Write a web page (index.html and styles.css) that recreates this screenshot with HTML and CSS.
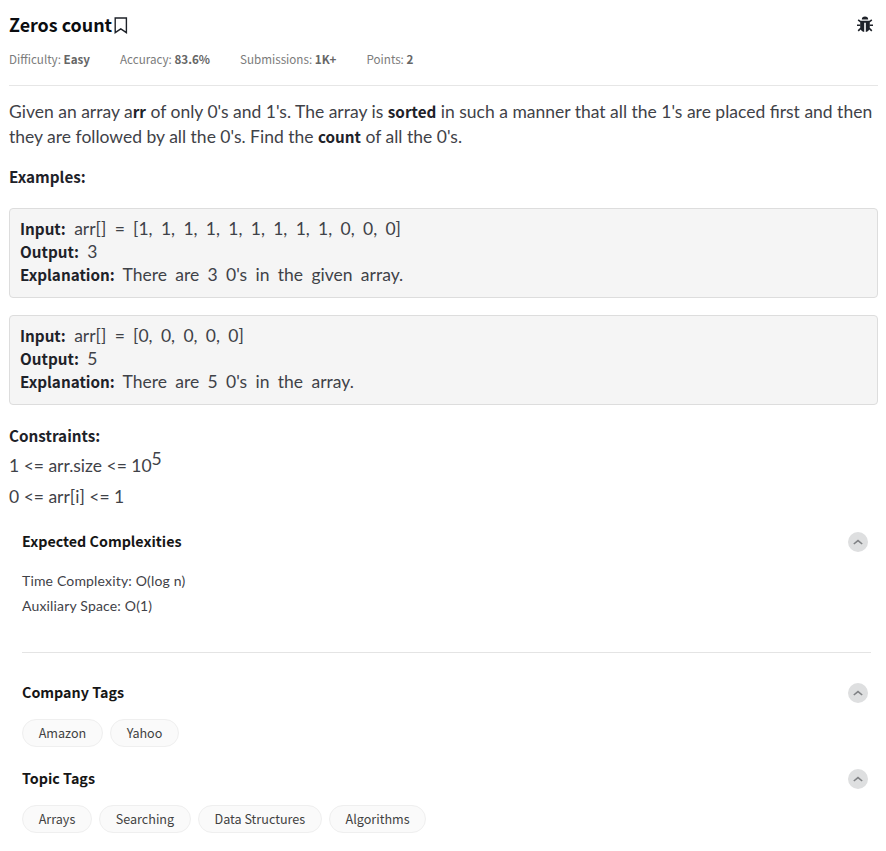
FILE: index.html
```html
<!DOCTYPE html>
<html lang="en">
<head>
<meta charset="utf-8">
<title>Zeros count</title>
<link rel="stylesheet" href="styles.css">
</head>
<body>
<main class="problem">
  <header class="head">
    <h1 class="title">Zeros count</h1>
    <svg class="bookmark" viewBox="0 0 14 17"><path d="M1.2 1h11.2v14.6L6.8 11.8 1.2 15.6z"/></svg>
    <svg class="bug" viewBox="0 0 16 16"><path class="shell" d="M4.8 3.4a3.2 3 0 0 1 6.4 0zM3.2 4.8h9.6v6.2c0 2.8-1.8 4.6-4 4.9V6.8H7.2v9.1c-2.2-.3-4-2.1-4-4.9z"/><path class="legs" d="M3.8 6 1.2 3.8M3.4 9.3H0M4 12.2 1.2 14.8M12.2 6l2.6-2.2M12.6 9.3H16M12 12.2l2.8 2.6"/></svg>
  </header>
  <div class="meta">
    <span>Difficulty: <b>Easy</b></span>
    <span>Accuracy: <b>83.6%</b></span>
    <span>Submissions: <b>1K+</b></span>
    <span>Points: <b>2</b></span>
  </div>
  <section class="statement">
    <p class="intro">Given an array a<b>rr</b> of only 0's and 1's. The array is <b>sorted</b> in such a manner that all the 1's are placed first and then<br>they are followed by all the 0's. Find the <b>count</b> of all the 0's.</p>
    <p class="label"><b>Examples:</b></p>
    <pre class="example"><b>Input:</b> arr[] = [1, 1, 1, 1, 1, 1, 1, 1, 1, 0, 0, 0]
<b>Output:</b> 3
<b>Explanation:</b> There are 3 0's in the given array.</pre>
    <pre class="example"><b>Input:</b> arr[] = [0, 0, 0, 0, 0]
<b>Output:</b> 5
<b>Explanation:</b> There are 5 0's in the array.</pre>
    <p class="constraints"><b>Constraints:</b><br>1 &lt;= arr.size &lt;= 10<sup>5</sup><br>0 &lt;= arr[i] &lt;= 1</p>
  </section>
  <section class="panel complexity">
    <h2>Expected Complexities <svg class="toggle" viewBox="0 0 20 20"><circle cx="10" cy="10" r="10"/><path d="M5.8 12 10 8.6l4.2 3.4"/></svg></h2>
    <p>Time Complexity: O(log n)<br>Auxiliary Space: O(1)</p>
  </section>
  <section class="panel">
    <h2>Company Tags <svg class="toggle" viewBox="0 0 20 20"><circle cx="10" cy="10" r="10"/><path d="M5.8 12 10 8.6l4.2 3.4"/></svg></h2>
    <div class="tags"><span>Amazon</span><span>Yahoo</span></div>
  </section>
  <section class="panel">
    <h2>Topic Tags <svg class="toggle" viewBox="0 0 20 20"><circle cx="10" cy="10" r="10"/><path d="M5.8 12 10 8.6l4.2 3.4"/></svg></h2>
    <div class="tags"><span>Arrays</span><span>Searching</span><span>Data Structures</span><span>Algorithms</span></div>
  </section>
</main>
</body>
</html>
```
FILE: styles.css
```css
* { box-sizing: border-box; }
body {
  margin: 0;
  background: #fff;
  color: #3f4248;
  font-family: Lato, sans-serif;
}
h1, h2, p, pre { margin: 0; }
b, h1, h2 { font-family: "Noto Sans CJK SC", sans-serif; font-weight: 700; }
.problem { padding: 9px 8px 0 9px; }
.head { display: flex; align-items: center; height: 32px; }
.title { font-size: 17.9px; line-height: 31px; margin-top: -1px; color: #0b0d10; }
.bookmark { width: 14px; height: 17px; margin: 1px 0 0 2px; fill: none; stroke: #1e2229; stroke-width: 1.4; }
.bug { width: 16px; height: 16px; margin: -3px 5px 0 auto; }
.shell { fill: #1e2229; }
.legs { fill: none; stroke: #1e2229; stroke-width: 1.6; }
.meta {
  display: flex;
  gap: 30px;
  height: 45px;
  border-bottom: 1px solid #e6e6e6;
  font: 11.65px/36px "Noto Sans CJK SC", sans-serif;
  color: #7b7b7b;
}
.meta b { color: #666; }
.statement { font-size: 17.5px; }
.statement b { font-size: 15.25px; line-height: 1; color: #1e2229; }
.intro { margin-top: 13px; line-height: 25px; white-space: nowrap; }
.label { margin-top: 15px; line-height: 25px; }
.example {
  height: 90px;
  margin-top: 19px;
  padding: 8px 10px;
  border: 1px solid #ddd;
  border-radius: 4px;
  background: #f5f5f5;
  font: 17.5px/23px Lato, sans-serif;
  word-spacing: 3.85px;
}
.example + .example { margin-top: 17px; }
.constraints { margin-top: 16px; line-height: 30.4px; }
.constraints sup { font-size: 17.5px; line-height: 0; vertical-align: 7px; }
.panel { padding: 0 7px 0 13px; }
.panel h2 {
  display: flex;
  justify-content: space-between;
  align-items: center;
  height: 30px;
  padding-right: 3.5px;
  font-size: 14.3px;
  color: #161616;
}
.toggle { width: 20px; height: 20px; margin-top: 3px; }
.toggle circle { fill: #dedfe0; }
.toggle path { fill: none; stroke: #808285; stroke-width: 1.6; }
.complexity { margin-top: 13px; }
.complexity p { height: 98px; padding-top: 13px; font-size: 14px; letter-spacing: 0.17px; line-height: 25px; border-bottom: 1px solid #e4e4e4; }
.complexity + .panel { margin-top: 23px; }
.tags { display: flex; gap: 7px; margin-top: 13px; margin-bottom: 15px; }
.tags span {
  height: 28px;
  padding: 0 15.7px;
  border: 1px solid #efefef;
  border-radius: 14px;
  background: #fafafa;
  font: 12.6px/25px "Noto Sans CJK SC", sans-serif;
  color: #424242;
}
```
